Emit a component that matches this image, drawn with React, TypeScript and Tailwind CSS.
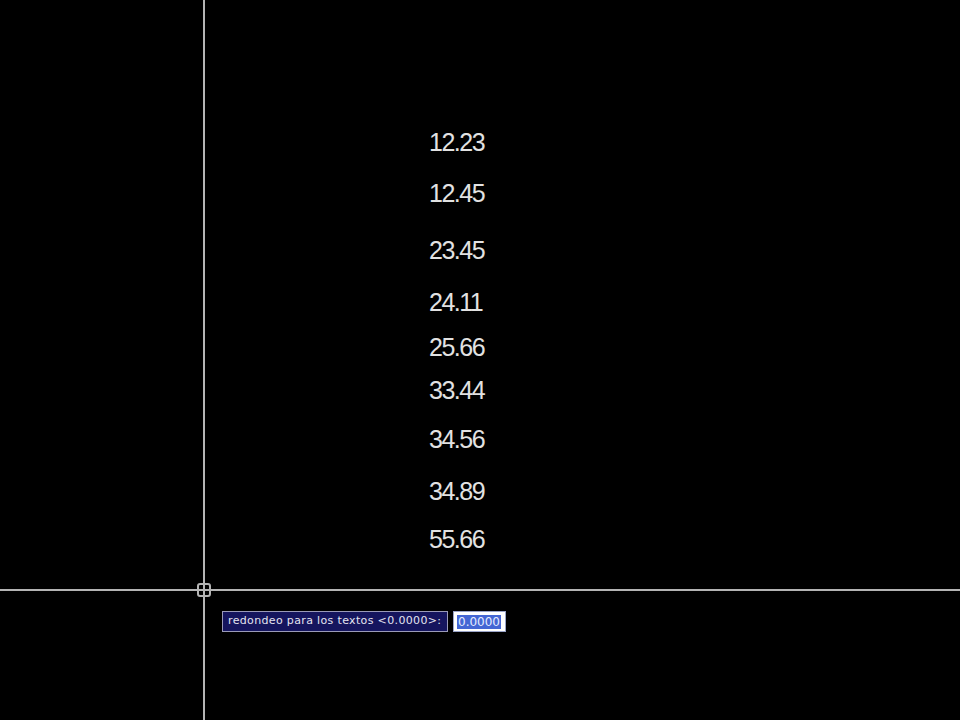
const LABELS: { text: string; top: number }[] = [
  { text: "12.23", top: 129 },
  { text: "12.45", top: 180 },
  { text: "23.45", top: 237 },
  { text: "24.11", top: 289 },
  { text: "25.66", top: 334 },
  { text: "33.44", top: 377 },
  { text: "34.56", top: 426 },
  { text: "34.89", top: 478 },
  { text: "55.66", top: 526 },
];

export default function App() {
  return (
    <div className="relative h-[720px] w-[960px] overflow-hidden bg-black font-['Liberation_Sans',Arial,sans-serif]">
      {/* model space text entities */}
      {LABELS.map((l) => (
        <div
          key={l.text}
          className="absolute left-[429px] text-[25px] leading-[26px] tracking-[-1.5px] text-[#e2e2e2]"
          style={{ top: l.top }}
        >
          {l.text}
        </div>
      ))}

      {/* crosshair */}
      <div className="absolute left-[203px] top-0 h-full w-[2px] bg-[#b4b4b4]" />
      <div className="absolute left-0 top-[589px] h-[2px] w-full bg-[#b4b4b4]" />
      <div className="absolute left-[197px] top-[583px] h-[14px] w-[14px] rounded-[3px] border-2 border-[#b4b4b4]" />

      {/* dynamic input */}
      <div className="absolute left-[222px] top-[611px] flex items-center gap-[5px] font-['DejaVu_Sans',sans-serif]">
        <div className="flex h-[21px] w-[226px] items-center overflow-hidden whitespace-nowrap border border-[#9a9ab8] bg-[#15155e] px-[5px] text-[11px] tracking-[0.35px] text-[#e4e4f0]">
          redondeo para los textos &lt;0.0000&gt;:
        </div>
        <div className="flex h-[21px] w-[53px] items-center border border-[#9aa4c8] bg-white px-[3px]">
          <span className="bg-[#4466d4] px-[1px] text-[12px] leading-[14px] text-[#e6ecff]">0.0000</span>
        </div>
      </div>
    </div>
  );
}
